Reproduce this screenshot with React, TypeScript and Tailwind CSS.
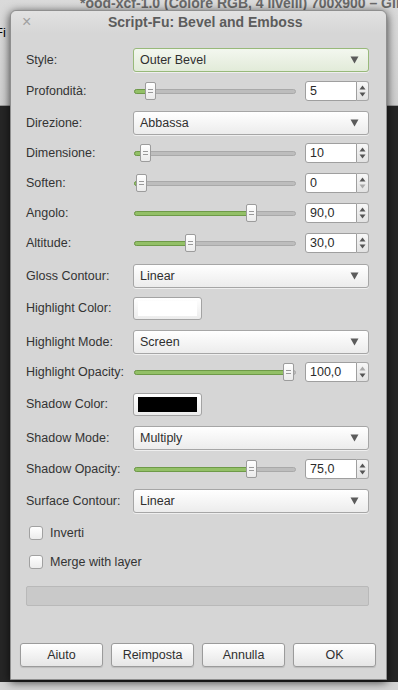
import React from 'react';

const FONT = "font-['Liberation_Sans',Arial,sans-serif]";

type RowDef =
  | { kind: 'combo'; label: string; value: string; mt: string; focus?: boolean }
  | { kind: 'slider'; label: string; value: string; mt: string; thumb: number; upOff?: boolean; downOff?: boolean }
  | { kind: 'color'; label: string; color: string; mt: string };

const rows: RowDef[] = [
  { kind: 'combo', label: 'Style:', value: 'Outer Bevel', mt: 'mt-0', focus: true },
  { kind: 'slider', label: 'Profondità:', value: '5', mt: 'mt-[9px]', thumb: 11 },
  { kind: 'combo', label: 'Direzione:', value: 'Abbassa', mt: 'mt-[10px]' },
  { kind: 'slider', label: 'Dimensione:', value: '10', mt: 'mt-[8px]', thumb: 6 },
  { kind: 'slider', label: 'Soften:', value: '0', mt: 'mt-[10px]', thumb: 2, downOff: true },
  { kind: 'slider', label: 'Angolo:', value: '90,0', mt: 'mt-[10px]', thumb: 112 },
  { kind: 'slider', label: 'Altitude:', value: '30,0', mt: 'mt-[10px]', thumb: 51 },
  { kind: 'combo', label: 'Gloss Contour:', value: 'Linear', mt: 'mt-[11px]' },
  { kind: 'color', label: 'Highlight Color:', color: 'bg-white', mt: 'mt-[9px]' },
  { kind: 'combo', label: 'Highlight Mode:', value: 'Screen', mt: 'mt-[10px]' },
  { kind: 'slider', label: 'Highlight Opacity:', value: '100,0', mt: 'mt-[8px]', thumb: 149, upOff: true },
  { kind: 'color', label: 'Shadow Color:', color: 'bg-black', mt: 'mt-[11px]' },
  { kind: 'combo', label: 'Shadow Mode:', value: 'Multiply', mt: 'mt-[10px]' },
  { kind: 'slider', label: 'Shadow Opacity:', value: '75,0', mt: 'mt-[9px]', thumb: 112 },
  { kind: 'combo', label: 'Surface Contour:', value: 'Linear', mt: 'mt-[10px]' },
];

const DownArrow = ({ className = '' }: { className?: string }) => (
  <svg width="9" height="8" viewBox="0 0 9 8" className={className}>
    <polygon points="0.5,0.5 8.5,0.5 4.5,7.5" fill="#5b5b5b" />
  </svg>
);

const Combo = ({ value, focus }: { value: string; focus?: boolean }) => (
  <div
    className={`flex-1 h-[24px] flex items-center justify-between pl-[6px] pr-[9px] rounded-[3px] border shadow-[0_1px_0_rgba(255,255,255,0.6)] ${
      focus
        ? 'border-[#98b97a] bg-gradient-to-b from-[#f3f7ef] to-[#e2ebd9]'
        : 'border-[#a6a6a6] bg-gradient-to-b from-[#ffffff] to-[#ececec]'
    }`}
  >
    <span className="text-[12.5px] text-[#2f2f2f]">{value}</span>
    <DownArrow />
  </div>
);

const Tri = ({ up, off }: { up?: boolean; off?: boolean }) => (
  <svg width="7" height="5" viewBox="0 0 7 5">
    <polygon points={up ? '3.5,0.5 6.5,4.5 0.5,4.5' : '0.5,0.5 6.5,0.5 3.5,4.5'} fill={off ? '#a9a9a9' : '#555555'} />
  </svg>
);

const Slider = ({ thumb }: { thumb: number }) => (
  <div className="relative flex-1 h-[20px] flex items-center">
    <div className="relative w-full h-[5px] rounded-full bg-[#bdbdbd] border border-[#a9a9a9]">
      <div
        className="absolute left-[-1px] top-[-1px] h-[5px] rounded-full bg-[#93c067] border border-[#6e9a48]"
        style={{ width: thumb + 6 }}
      />
    </div>
    <div
      className="absolute top-[1px] w-[11px] h-[18px] rounded-[2px] border border-[#9c9c9c] bg-gradient-to-b from-[#ffffff] to-[#ebebeb] flex flex-col items-center justify-center gap-[2px]"
      style={{ left: thumb }}
    >
      <div className="w-[5px] h-px bg-[#9a9a9a]" />
      <div className="w-[5px] h-px bg-[#9a9a9a]" />
    </div>
  </div>
);

const Spin = ({ value, upOff, downOff }: { value: string; upOff?: boolean; downOff?: boolean }) => (
  <div className="flex h-[20px] w-[64px]">
    <div className="flex-1 flex items-center pl-[4px] bg-white border border-[#9f9f9f] rounded-l-[3px] text-[12.5px] text-[#2a2a2a]">
      {value}
    </div>
    <div className="w-[12px] flex flex-col items-center justify-center gap-[2px] border border-l-0 border-[#a6a6a6] rounded-r-[3px] bg-gradient-to-b from-[#f7f7f7] to-[#e2e2e2]">
      <Tri up off={upOff} />
      <Tri off={downOff} />
    </div>
  </div>
);

const ColorButton = ({ color }: { color: string }) => (
  <div className="w-[69px] h-[23px] rounded-[3px] border border-[#a3a3a3] bg-gradient-to-b from-[#ffffff] to-[#ececec] px-[4px] py-[3px]">
    <div className={`w-full h-full ${color}`} />
  </div>
);

const Check = ({ label, mt }: { label: string; mt: string }) => (
  <div className={`${mt} h-[20px] flex items-center gap-[7px] pl-[3px]`}>
    <div className="w-[14px] h-[14px] rounded-[3px] border border-[#a1a1a1] bg-gradient-to-b from-[#ffffff] to-[#ececec]" />
    <span className="text-[12.5px] text-[#333]">{label}</span>
  </div>
);

const Btn = ({ label }: { label: string }) => (
  <div className="w-[83px] h-[24px] flex items-center justify-center rounded-[3px] border border-[#9b9b9b] bg-gradient-to-b from-[#ffffff] to-[#e6e6e6] shadow-[0_1px_1px_rgba(0,0,0,0.12)] text-[12.5px] text-[#2f2f2f]">
    {label}
  </div>
);

export default function App() {
  return (
    <div className={`relative w-[398px] h-[690px] overflow-hidden bg-[#262626] ${FONT}`}>
      {/* gimp image window behind */}
      <div className="h-[106px] bg-gradient-to-b from-[#dadada] to-[#cfcfcf] border-b border-[#9a9a9a]">
        <div className="relative -top-[7px] pl-[80px] whitespace-nowrap text-[14px] font-bold text-[#6a6a6a]">
          *ood-xcf-1.0 (Colore RGB, 4 livelli) 700x900 – GIMP
        </div>
        <div className="relative top-[2px] -ml-[5px] text-[13px] text-black">Fi</div>
      </div>
      <div className="absolute bottom-0 left-0 right-0 h-[8px] bg-[#d4d4d4]" />

      {/* dialog */}
      <div className="absolute left-[10px] top-[10px] w-[377px] h-[670px] flex flex-col rounded-t-[6px] bg-[#d6d6d6] border border-[#8f8f8f] shadow-[0_2px_10px_rgba(0,0,0,0.75)]">
        <div className="h-[22px] flex items-center rounded-t-[6px] bg-gradient-to-b from-[#e2e2e2] to-[#d6d6d6]">
          <span className="w-[97px] pl-[11px] text-[16px] leading-none text-[#a0a0a0]">×</span>
          <span className="text-[14px] font-bold text-[#5c5c5c]">Script-Fu: Bevel and Emboss</span>
        </div>

        <div className="flex flex-col pt-[15px] pl-[15px] pr-[17px]">
          {rows.map((r) => (
            <div key={r.label} className={`${r.mt} flex items-center`}>
              <span className="w-[107px] shrink-0 text-[12.5px] text-[#333]">{r.label}</span>
              {r.kind === 'combo' && <Combo value={r.value} focus={r.focus} />}
              {r.kind === 'slider' && (
                <div className="flex-1 flex items-center gap-[9px] pl-[1px]">
                  <Slider thumb={r.thumb} />
                  <Spin value={r.value} upOff={r.upOff} downOff={r.downOff} />
                </div>
              )}
              {r.kind === 'color' && <ColorButton color={r.color} />}
            </div>
          ))}

          <Check label="Inverti" mt="mt-[10px]" />
          <Check label="Merge with layer" mt="mt-[9px]" />

          <div className="mt-[14px] h-[20px] rounded-[2px] border border-[#b9b9b9] bg-[#c9c9c9]" />
        </div>

        <div className="mt-auto mb-[12px] flex gap-[8px] pl-[9px]">
          <Btn label="Aiuto" />
          <Btn label="Reimposta" />
          <Btn label="Annulla" />
          <Btn label="OK" />
        </div>
      </div>
    </div>
  );
}
